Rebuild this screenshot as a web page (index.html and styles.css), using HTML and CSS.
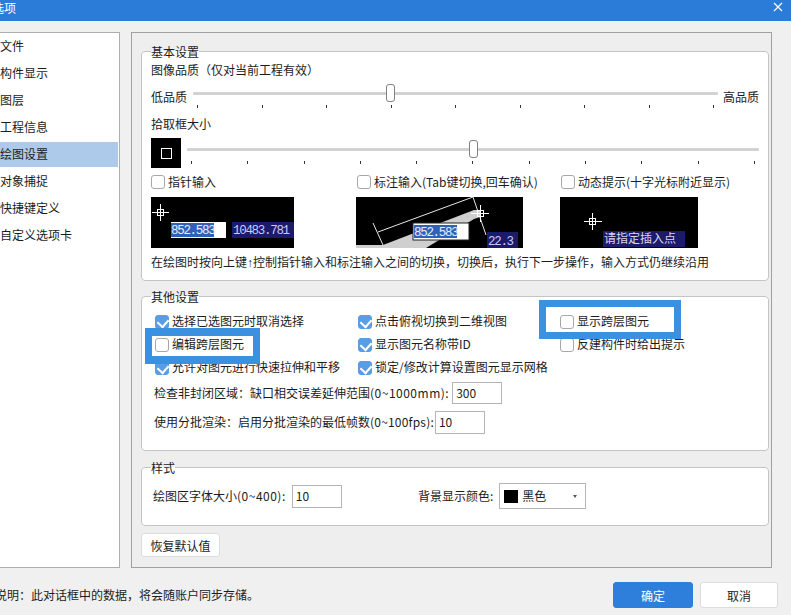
FILE: index.html
```html
<!DOCTYPE html>
<html lang="zh-CN">
<head>
<meta charset="utf-8">
<title>选项</title>
<link rel="stylesheet" href="styles.css">
</head>
<body>
<div class="window">
  <header class="titlebar">
    <span class="title">选项</span>
    <svg class="close" width="10" height="10" viewBox="0 0 10 10"><path d="M1 1L9 9M9 1L1 9" stroke="#fff" stroke-width="1.2" fill="none"/></svg>
  </header>
  <div class="main">
    <ul class="nav">
      <li>文件</li>
      <li>构件显示</li>
      <li>图层</li>
      <li>工程信息</li>
      <li class="active">绘图设置</li>
      <li>对象捕捉</li>
      <li>快捷键定义</li>
      <li>自定义选项卡</li>
    </ul>
    <section class="panel">
      <fieldset class="group basic">
        <legend>基本设置</legend>
        <div class="line">图像品质（仅对当前工程有效）</div>
        <div class="quality">
          <span>低品质</span>
          <div class="slider">
            <i class="track"></i><i class="thumb thumb-quality"></i>
            <div class="ticks"><b></b><b></b><b></b><b></b><b></b><b></b><b></b><b></b><b></b></div>
          </div>
          <span>高品质</span>
        </div>
        <div class="line pick-title">拾取框大小</div>
        <div class="pick">
          <div class="pick-preview"><i></i></div>
          <div class="slider">
            <i class="track"></i><i class="thumb thumb-pick"></i>
            <div class="ticks"><b></b><b></b><b></b><b></b><b></b><b></b><b></b><b></b><b></b><b></b><b></b></div>
          </div>
        </div>
        <div class="modes">
          <div class="mode">
            <label class="check"><input type="checkbox"><span>指针输入</span></label>
            <svg class="shot s1" width="143" height="51" viewBox="0 0 143 51">
              <rect width="143" height="51" fill="#000"/>
              <path d="M1 15.5H18M9.5 7V24" stroke="#fff"/>
              <rect x="6.5" y="12.5" width="6" height="6" fill="none" stroke="#fff"/>
              <rect x="20" y="25" width="55" height="16" fill="#fff"/>
              <rect x="20" y="26" width="43" height="14" fill="#2f62b5"/>
              <text x="20" y="37" class="mono">852.583</text>
              <rect x="81" y="25" width="62" height="16" fill="#1c1a6b"/>
              <text x="82" y="37" class="mono lilac">10483.781</text>
            </svg>
          </div>
          <div class="mode">
            <label class="check"><input type="checkbox"><span>标注输入(Tab键切换,回车确认)</span></label>
            <svg class="shot s2" width="167" height="51" viewBox="0 0 167 51">
              <rect width="167" height="51" fill="#000"/>
              <path d="M0 48H27L118 13H124V20L118 22L70 51H0Z" fill="#cfcfcf"/>
              <path d="M17 26L27 48M22 35L117 0M117 0L130 38" stroke="#e6e6e6" fill="none"/>
              <path d="M115 16.5H133M124.500 8V25" stroke="#fff"/>
              <rect x="121.500" y="13.500" width="6" height="6" fill="none" stroke="#fff"/>
              <rect x="57" y="26" width="56" height="17" fill="#fff" stroke="#222"/>
              <rect x="58" y="28" width="43" height="13" fill="#2f62b5"/>
              <text x="58" y="39" class="mono">852.583</text>
              <rect x="131" y="35" width="31" height="16" fill="#1c1a6b"/>
              <text x="132" y="48" class="mono lilac">22.3</text>
            </svg>
          </div>
          <div class="mode">
            <label class="check"><input type="checkbox"><span>动态提示(十字光标附近显示)</span></label>
            <svg class="shot s3" width="138" height="51" viewBox="0 0 138 51">
              <rect width="138" height="51" fill="#000"/>
              <path d="M24 24.500H42M32.500 16V33" stroke="#fff"/>
              <rect x="29.500" y="21.500" width="6" height="6" fill="none" stroke="#fff"/>
              <rect x="43" y="34" width="82" height="16" fill="#1c1a6b"/>
              <text x="44" y="46" class="cjk">请指定插入点</text>
            </svg>
          </div>
        </div>
        <div class="line note">在绘图时按向上键<span class="arrow">↑</span>控制指针输入和标注输入之间的切换，切换后，执行下一步操作，输入方式仍继续沿用</div>
      </fieldset>

      <fieldset class="group other">
        <legend>其他设置</legend>
        <div class="checks">
          <label class="check"><input type="checkbox" checked><span>选择已选图元时取消选择</span></label>
          <label class="check"><input type="checkbox" checked><span>点击俯视切换到二维视图</span></label>
          <div class="cell">
            <label class="check"><input type="checkbox"><span>显示跨层图元</span></label>
            <i class="mark mark-show"></i>
          </div>
          <div class="cell">
            <label class="check"><input type="checkbox"><span>编辑跨层图元</span></label>
            <i class="mark mark-edit"></i>
          </div>
          <label class="check"><input type="checkbox" checked><span>显示图元名称带ID</span></label>
          <label class="check"><input type="checkbox"><span>反建构件时给出提示</span></label>
          <label class="check"><input type="checkbox" checked><span>允许对图元进行快速拉伸和平移</span></label>
          <label class="check"><input type="checkbox" checked><span>锁定/修改计算设置图元显示网格</span></label>
        </div>
        <div class="field first">
          <span>检查非封闭区域：缺口相交误差延伸范围<span class="range-wide">(0~1000mm):</span></span>
          <input class="num" type="text" value="300">
        </div>
        <div class="field second">
          <span>使用分批渲染：启用分批渲染的最低帧数<span class="range-mid">(0~100fps):</span></span>
          <input class="num" type="text" value="10">
        </div>
      </fieldset>

      <fieldset class="group style">
        <legend>样式</legend>
        <div class="style-row">
          <div class="style-size">
            <span>绘图区字体大小<span class="range-wide">(0~400):</span></span>
            <input class="num" type="text" value="10">
          </div>
          <div class="style-color">
            <span>背景显示颜色:</span>
            <div class="select">
              <i class="swatch"></i>
              <span>黑色</span>
              <i class="caret"></i>
            </div>
          </div>
        </div>
      </fieldset>

      <button class="btn reset" type="button">恢复默认值</button>
    </section>
  </div>
  <footer class="footer">
    <span class="hint">说明：此对话框中的数据，将会随账户同步存储。</span>
    <div class="actions">
      <button class="btn primary" type="button">确定</button>
      <button class="btn cancel" type="button">取消</button>
    </div>
  </footer>
</div>
</body>
</html>
```
FILE: styles.css
```css
* { box-sizing: border-box; }

html, body {
  margin: 0;
  padding: 0;
  overflow: hidden;
}

body {
  font-family: "Noto Sans CJK SC", "Noto Sans", sans-serif;
  font-size: 12px;
  line-height: 17px;
  color: #1c1c1c;
  background: #f0f0f0;
}

.window {
  width: 791px;
  height: 615px;
  overflow: hidden;
  display: flex;
  flex-direction: column;
}

.titlebar {
  height: 21px;
  flex: none;
  background: #2b7cd8;
  color: #fff;
  display: flex;
  align-items: flex-start;
  justify-content: space-between;
  padding: 0 8px 0 0;
}

.title {
  margin-left: -8px;
  line-height: 15px;
}

.close { margin-top: 2px; }

.main {
  flex: none;
  height: 536px;
  margin-top: 11px;
  display: flex;
}

.nav {
  width: 120px;
  flex: none;
  margin: 0 11px 0 0;
  padding: 1px 1px 0 0;
  list-style: none;
  background: #fff;
  border: 1px solid #adadad;
  border-left: 0;
}

.nav li {
  height: 25px;
  line-height: 23px;
  margin-bottom: 2px;
  white-space: nowrap;
}

.nav .active { background: #adcaeb; }

.panel {
  width: 641px;
  flex: none;
  border: 1px solid #a0a0a0;
  padding: 10px 2px 0 9px;
  background: #eeeeee;
}

.group {
  margin: 0;
  padding: 0 9px;
  width: 628px;
  background: #fff;
  border: 1px solid #c4c4c4;
  border-radius: 4px;
  min-width: 0;
}

.group legend {
  padding: 0;
  height: 17px;
  line-height: 17px;
}

.line {
  height: 20px;
  line-height: 20px;
  white-space: nowrap;
}

.basic { height: 238px; }

.quality {
  display: flex;
  gap: 6px;
  height: 26px;
  margin-top: 4px;
  align-items: center;
  justify-content: space-between;
}

.quality > span {
  flex: none;
  width: 36px;
  white-space: nowrap;
  margin-bottom: 2px;
}

.slider {
  position: relative;
  flex: 1;
  height: 26px;
}

.quality .slider { margin-right: -1px; }

.track {
  position: absolute;
  left: 0;
  right: 0;
  top: 8px;
  height: 3px;
  background: #d2d2d2;
  border-radius: 1px;
}

.thumb {
  position: absolute;
  top: 0;
  width: 9px;
  height: 18px;
  background: #fff;
  border: 1px solid #808080;
  border-radius: 3px;
}

.thumb-quality { left: 193px; }
.thumb-pick { left: 282px; }

.ticks {
  position: absolute;
  left: 4px;
  right: 4px;
  top: 21px;
  display: flex;
  justify-content: space-between;
}

.ticks b {
  width: 1px;
  height: 3px;
  background: #333;
}

.pick-title { margin-top: 4px; }

.pick {
  display: flex;
  gap: 6px;
  height: 30px;
  margin-top: 4px;
}

.pick .slider { margin-top: 2px; }

.pick-preview {
  width: 30px;
  height: 30px;
  background: #000;
  display: flex;
  align-items: center;
  justify-content: center;
}

.pick-preview i {
  width: 11px;
  height: 11px;
  border: 1px solid #fff;
}

.modes {
  display: grid;
  grid-template-columns: 205px 204px 1fr;
  margin-top: 4px;
}

.mode { display: flex; flex-direction: column; }
.mode .check { height: 20px; }
.mode + .mode .check { padding-left: 1px; }

.shot { display: block; margin-top: 5px; }

.mono {
  font-family: "Liberation Mono", "DejaVu Sans Mono", monospace;
  font-size: 12.500px;
  letter-spacing: -1.300px;
  fill: #e8ecff;
}

.lilac { fill: #c9c9ff; }

.cjk {
  font-family: "Noto Sans CJK SC", sans-serif;
  font-size: 12px;
  fill: #d8d8e8;
}

.note { margin-top: 4px; }

.arrow { font-family: "Liberation Sans", sans-serif; }

.check {
  display: flex;
  align-items: center;
  gap: 3px;
  white-space: nowrap;
}

.check span { margin-bottom: 2px; }

.check input {
  appearance: none;
  -webkit-appearance: none;
  flex: none;
  width: 14px;
  height: 14px;
  margin: 0;
  background: #fff;
  border: 1px solid #a8a8a8;
  border-radius: 3px;
  position: relative;
}

.check input:checked {
  background: #5a9de2;
  border-color: #5a9de2;
}

.check input:checked::after {
  content: "";
  position: absolute;
  left: 3px;
  top: 1px;
  width: 6px;
  height: 8px;
  border: solid #fff;
  border-width: 0 2px 2px 0;
  transform: rotate(42deg);
}

.other {
  height: 163px;
  margin-top: 7px;
  padding: 5px 9px 0 13px;
}

.other legend { margin-left: -4px; }

.checks {
  display: grid;
  grid-template-columns: 203px 202px 1fr;
  grid-auto-rows: 23px;
}

.cell {
  position: relative;
  display: flex;
  z-index: 1;
}

.cell .check { flex: 1; }

.mark {
  position: absolute;
  border: 7px solid #3b90e0;
}

.mark-show {
  left: -21px;
  top: -10px;
  width: 142px;
  height: 39px;
}

.mark-edit {
  left: -10px;
  top: -5px;
  width: 115px;
  height: 36px;
  border-width: 8px 7px;
}

.field {
  display: flex;
  align-items: center;
  gap: 3px;
  margin-left: -1px;
  white-space: nowrap;
}

.field > span { margin-bottom: 2px; }

.range-wide { letter-spacing: 0.500px; }
.range-mid { letter-spacing: 0.200px; }

.field.first { height: 22px; margin-top: 3px; }
.field.second { height: 23px; margin-top: 7px; gap: 1px; }

.num {
  height: 100%;
  width: 50px;
  border: 1px solid #b4b4b4;
  background: #fff;
  font: inherit;
  color: inherit;
  padding: 0 3px 2px;
  border-radius: 0;
  outline: 0;
}

.style {
  height: 67px;
  margin-top: 8px;
  padding: 0 9px 0 11px;
}

.style legend { margin-left: -2px; }

.style-row {
  display: flex;
  align-items: center;
  height: 26px;
  margin-top: 7px;
}

.style-size {
  width: 265px;
  display: flex;
  align-items: center;
  gap: 6px;
  white-space: nowrap;
}

.style-size > span,
.style-color > span,
.select > span { margin-bottom: 2px; }

.style-size .num { height: 23px; }

.style-color {
  display: flex;
  align-items: center;
  gap: 6px;
  white-space: nowrap;
}

.select {
  width: 87px;
  height: 26px;
  border: 1px solid #b4b4b4;
  background: #fff;
  display: flex;
  align-items: center;
  padding: 0 8px 0 4px;
  gap: 4px;
}

.swatch {
  width: 14px;
  height: 13px;
  background: #000;
}

.caret {
  margin-left: auto;
  width: 0;
  height: 0;
  border-left: 2.500px solid transparent;
  border-right: 2.500px solid transparent;
  border-top: 3px solid #555;
}

.btn {
  font: inherit;
  border: 1px solid #dcdcdc;
  border-radius: 3px;
  background: #fff;
  color: inherit;
  padding: 0;
}

.reset {
  display: block;
  width: 79px;
  height: 24px;
  margin-top: 7px;
}

.footer {
  flex: 1;
  display: flex;
  align-items: flex-start;
  justify-content: space-between;
  padding: 14px 13px 0 0;
}

.hint {
  margin-left: -5px;
  margin-top: 4px;
}

.actions { display: flex; gap: 7px; }

.primary, .cancel { height: 26px; }

.primary {
  width: 80px;
  background: #2e7fdc;
  border-color: #2e7fdc;
  color: #fff;
}

.cancel { width: 78px; }
```
